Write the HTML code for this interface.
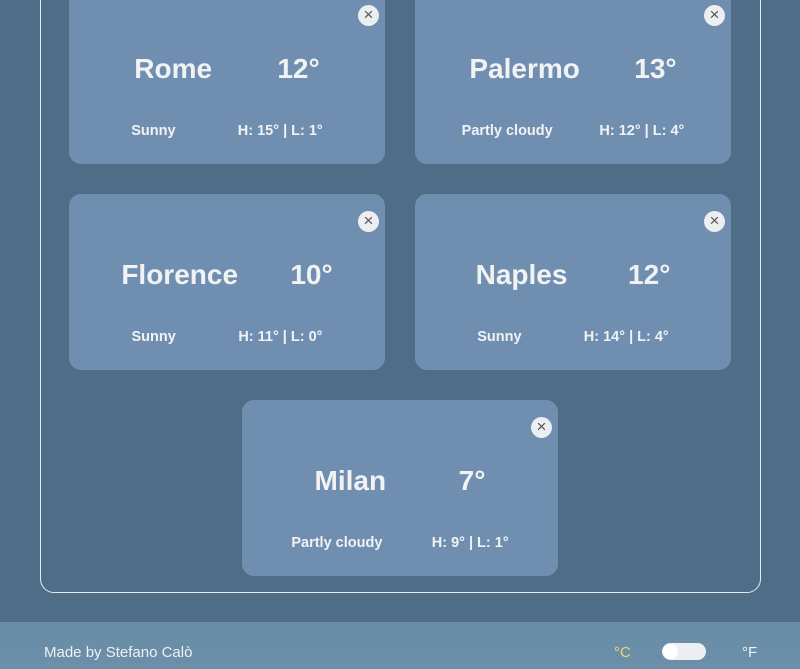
<!DOCTYPE html>
<html><head><meta charset="utf-8"><style>
*{margin:0;padding:0;box-sizing:border-box}
body{width:800px;height:669px;overflow:hidden;background:#4f6d87;font-family:"Liberation Sans",sans-serif;position:relative;color:#f1f2f4}
.box{position:absolute;left:40px;top:-20px;width:721px;height:613px;border:1px solid #e6ebf0;border-radius:14px}
.card{position:absolute;width:316px;height:176px;background:#708fb0;border-radius:12px}
.x{position:absolute;right:6px;top:17px;width:21px;height:21px;border-radius:50%;background:#eceef1;color:#555;font-size:17px;line-height:20px;text-align:center}
.r{position:absolute;left:0;width:316px;display:flex;justify-content:space-evenly;align-items:center}
.t{top:63px;font-size:28px;font-weight:600;height:36px}
.b{top:133px;font-size:14.5px;font-weight:600;height:20px}
.foot{position:absolute;left:0;top:622px;width:800px;height:47px;background:linear-gradient(#6a8ea8,#6c8fa9)}
.foot span{position:absolute;top:22px;font-size:15px;color:#eef1f4}
</style></head><body>
<div class="box"></div>
<div class="card" style="left:69px;top:-12px"><div class="x">×</div><div class="r t"><span>Rome</span><span>12°</span></div><div class="r b"><span>Sunny</span><span>H: 15° | L: 1°</span></div></div>
<div class="card" style="left:415px;top:-12px"><div class="x">×</div><div class="r t"><span>Palermo</span><span>13°</span></div><div class="r b"><span>Partly cloudy</span><span>H: 12° | L: 4°</span></div></div>
<div class="card" style="left:69px;top:194px"><div class="x">×</div><div class="r t"><span>Florence</span><span>10°</span></div><div class="r b"><span>Sunny</span><span>H: 11° | L: 0°</span></div></div>
<div class="card" style="left:415px;top:194px"><div class="x">×</div><div class="r t"><span>Naples</span><span>12°</span></div><div class="r b"><span>Sunny</span><span>H: 14° | L: 4°</span></div></div>
<div class="card" style="left:242px;top:400px"><div class="x">×</div><div class="r t"><span>Milan</span><span>7°</span></div><div class="r b"><span>Partly cloudy</span><span>H: 9° | L: 1°</span></div></div>
<div class="foot">
<span style="left:44px">Made by Stefano Calò</span>
<span style="left:614px;color:#f3d27a">°C</span>
<div style="position:absolute;left:662px;top:21px;width:44px;height:17px;border-radius:9px;background:#eceef1"></div>
<div style="position:absolute;left:663px;top:22px;width:15px;height:15px;border-radius:50%;background:#fff"></div>
<span style="left:742px">°F</span>
</div>
</body></html>
